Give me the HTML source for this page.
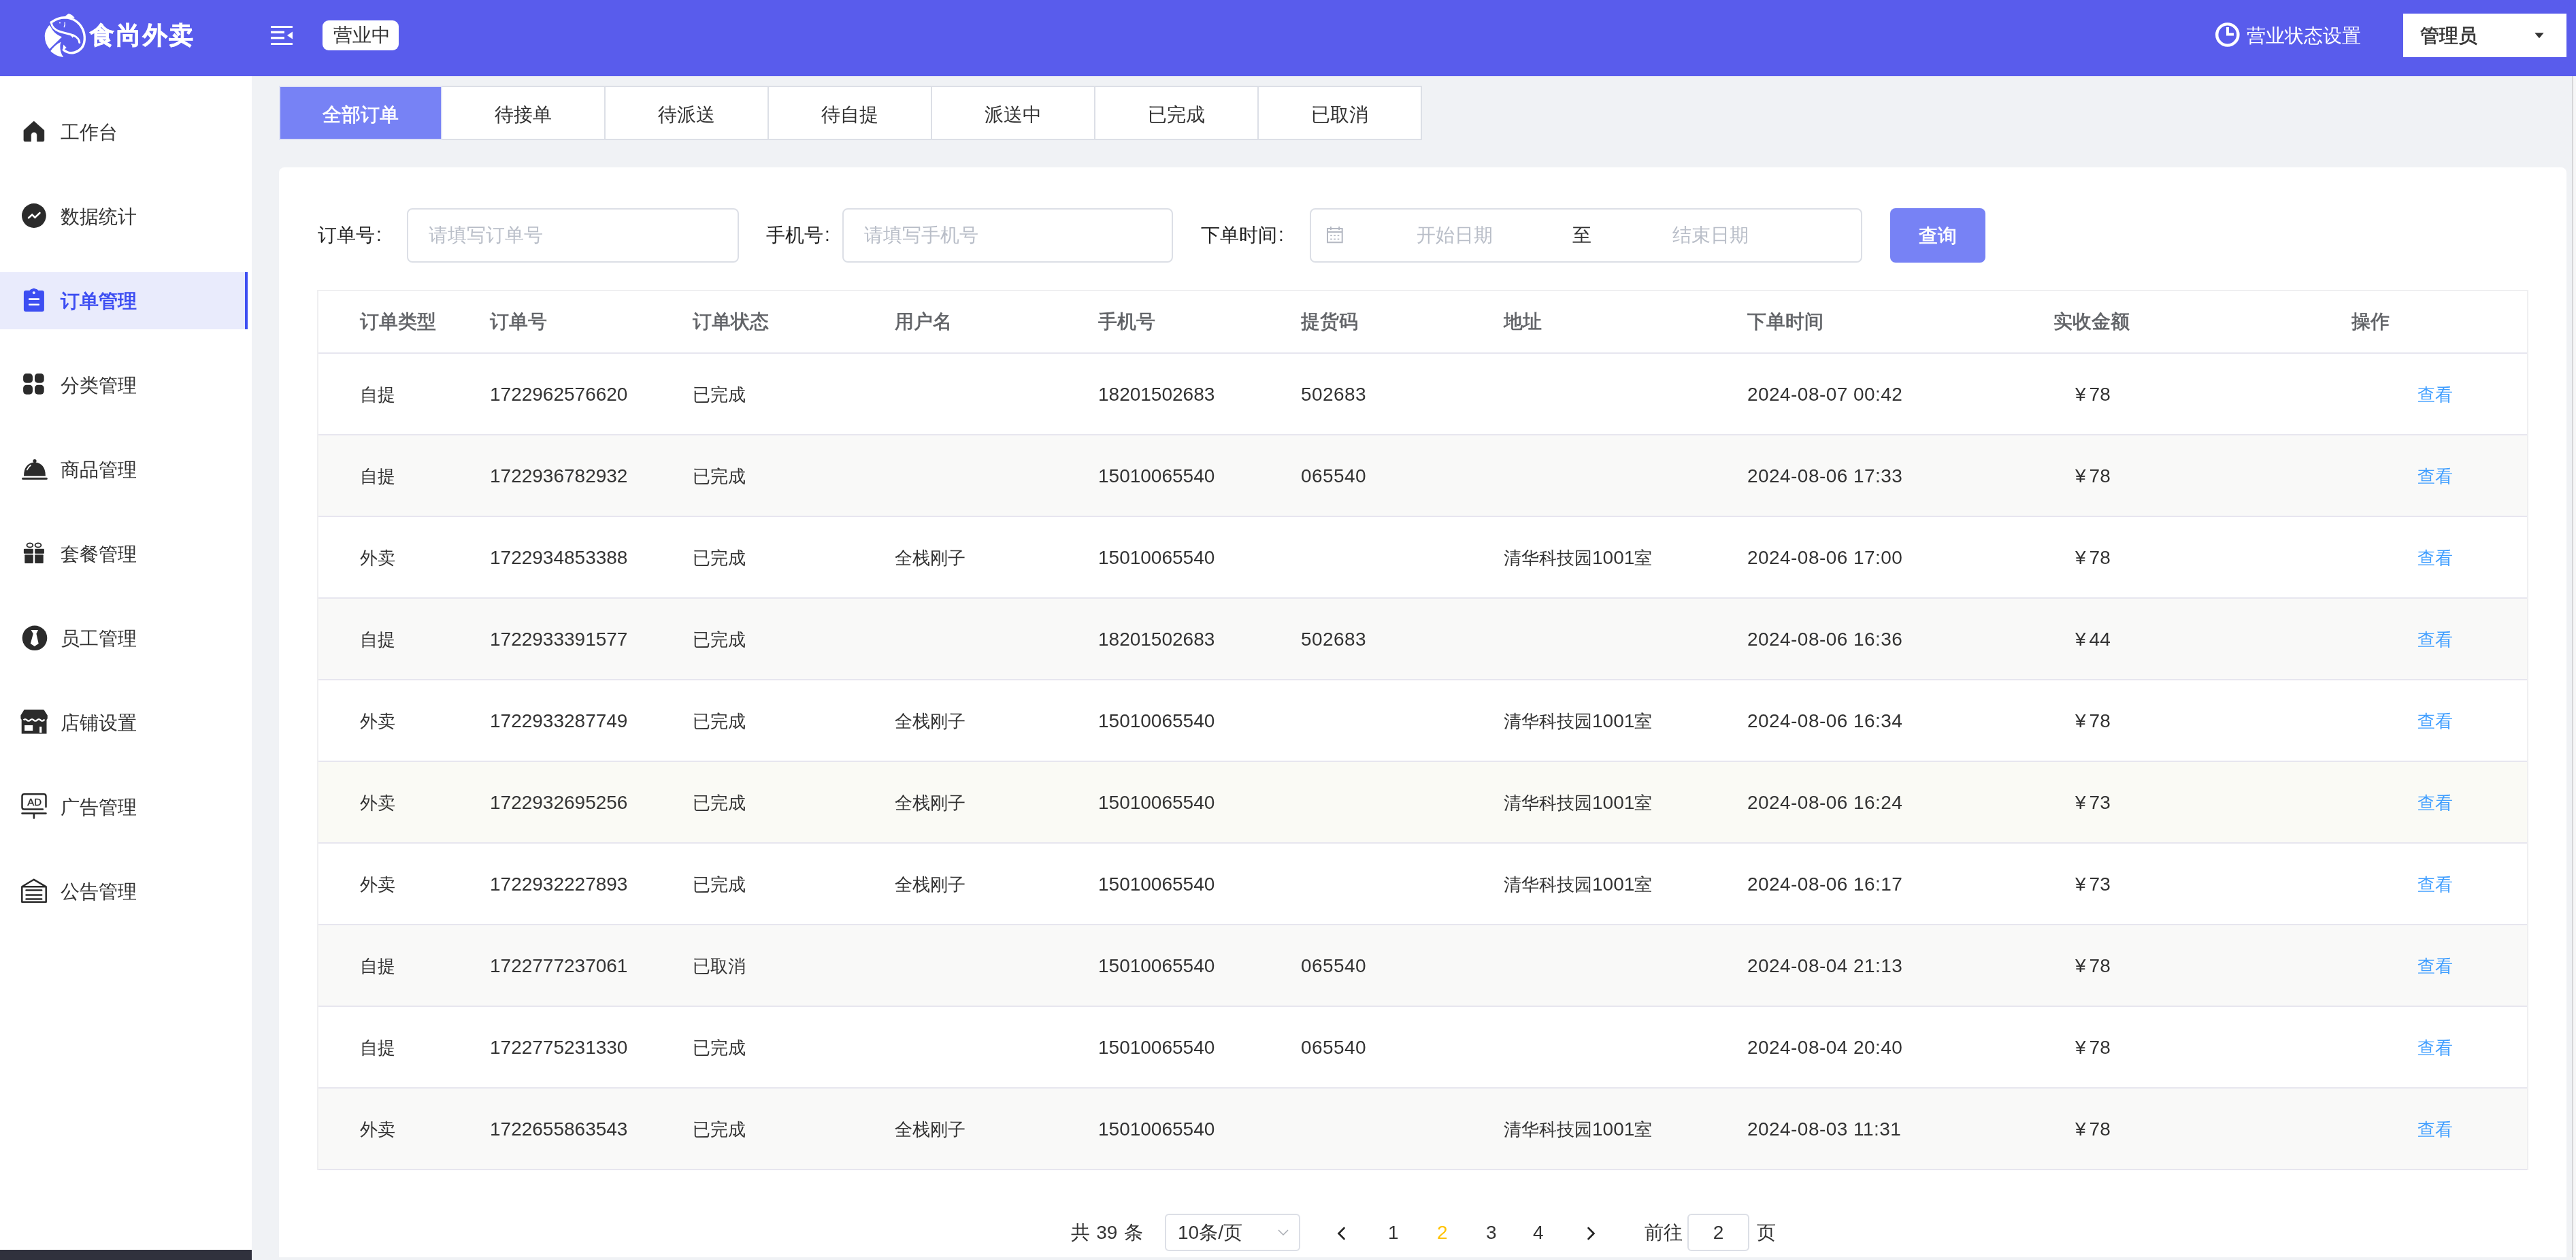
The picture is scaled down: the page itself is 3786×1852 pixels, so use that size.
<!DOCTYPE html>
<html><head><meta charset="utf-8">
<style>
*{box-sizing:border-box;margin:0;padding:0}
html,body{width:3786px;height:1852px;overflow:hidden;background:#f0f2f5;font-family:"Liberation Sans",sans-serif;color:#333;position:relative}
.a{position:absolute}
.t{position:absolute;white-space:nowrap;font-size:28px;line-height:40px;color:#333}
.th{color:#606266;-webkit-text-stroke:0.7px #606266}
.md{-webkit-text-stroke:0.7px currentColor}
.ph{color:#b9bec8}
.lk{color:#409eff}
.yen{margin-right:5px}
.c{font-size:26px}
</style></head><body>
<div id="root" style="position:absolute;left:0;top:0;width:3786px;height:1852px;overflow:hidden;will-change:transform;background:#f0f2f5">
<!-- header -->
<div class="a" style="left:0;top:0;width:3786px;height:112px;background:#595cec"></div>
<svg class="a" style="left:60px;top:15px" width="70" height="75" viewBox="0 0 70 75">
  <g fill="#fff">
    <path d="M12.5 22 C8 27.5 5.5 33 5.8 39 C6 46 8.5 52 12.8 57.1 L31 39.3 C23 36 17.5 31 14.9 25 Z"/>
    <path d="M14.3 60.1 C19.5 65.5 26 68.5 33.3 69 C29.5 64 28.2 58 28.4 52.4 C28.5 50 29 48 29.8 46.4 C23.5 49.5 18 54 14.3 60.1 Z"/>
    <path d="M33.5 11 C36 8.5 39 6 41 5 C44.5 6 47.5 8 50 11.5 Z"/>
    <path d="M42.6 35.2 L47 41 L48 35.6 Z"/>
    <path d="M32.2 59 L33.3 50.6 L37.8 55.2 Z"/>
    <circle cx="28" cy="18.5" r="1"/>
  </g>
  <g fill="none" stroke="#fff" stroke-linecap="round">
    <path d="M15.2 17.9 C20 14.5 27 11 35 10.8 C47 10.8 57 18 61.5 28 C66 38 65 50 59.5 56 C54 62 46 64 40 62 C37 61 35 60 33.3 58.3" stroke-width="3.4"/>
    <path d="M15.2 17.9 C16 24 20 28.5 26.8 31 C34 33.5 42 34.5 49 37.5 C54 40 56.5 44 56.8 47.6" stroke-width="3"/>
    <path d="M35.2 17.9 Q36 22 34.2 24.7" stroke-width="1.3"/>
  </g>
</svg>
<div class="t" style="left:132px;top:30px;font-size:36px;line-height:44px;color:#fff;font-weight:bold;-webkit-text-stroke:0.8px #fff;letter-spacing:2.8px">食尚外卖</div>
<svg class="a" style="left:396px;top:36px" width="36" height="32" viewBox="396 36 36 32">
  <g fill="#fff"><rect x="398" y="38" width="32" height="3"/><rect x="398" y="45.7" width="20" height="3.4"/><rect x="398" y="54" width="20" height="3.4"/><rect x="398" y="63" width="32" height="3"/><path d="M430 46.5 V57.6 L422 52 Z"/></g>
</svg>
<div class="a" style="left:474px;top:30px;width:112px;height:44px;background:#fff;border-radius:9px"></div>
<div class="t" style="left:490px;top:32px">营业中</div>
<svg class="a" style="left:3254px;top:31px" width="40" height="40" viewBox="3254 31 40 40">
  <circle cx="3273.8" cy="51" r="15.6" fill="none" stroke="#fff" stroke-width="4.4"/>
  <path d="M3274 40 V50.5 H3283" fill="none" stroke="#fff" stroke-width="4"/>
</svg>
<div class="t" style="left:3302px;top:33px;color:#fff">营业状态设置</div>
<div class="a" style="left:3532px;top:20px;width:240px;height:64px;background:#fff"></div>
<div class="t md" style="left:3557px;top:33px">管理员</div>
<svg class="a" style="left:3722px;top:44px" width="20" height="16" viewBox="3722 44 20 16"><path d="M3725.3 48.3 H3738.6 L3732 56.3 Z" fill="#333"/></svg>
<!-- sidebar -->
<div class="a" style="left:0;top:112px;width:370px;height:1740px;background:#fff"></div>
<div class="a" style="left:0;top:1837px;width:370px;height:15px;background:#30313d"></div>
<!-- scrollbar -->
<div class="a" style="left:3780px;top:112px;width:6px;height:1736px;background:#f7f7f7;border-left:2px solid #d6d6d8"></div>
<!-- card -->
<div class="a" style="left:410px;top:246px;width:3362px;height:1602px;background:#fff;border-radius:8px 8px 0 0"></div>
<!-- search -->
<div class="t" style="left:467px;top:326px;color:#1f1f1f">订单号<span style="position:relative;left:2px;top:-1px">:</span></div>
<div class="a" style="left:598px;top:306px;width:488px;height:80px;border:2px solid #dcdfe6;border-radius:8px"></div>
<div class="t ph" style="left:630px;top:326px">请填写订单号</div>
<div class="t" style="left:1126px;top:326px;color:#1f1f1f">手机号<span style="position:relative;left:2px;top:-1px">:</span></div>
<div class="a" style="left:1238px;top:306px;width:486px;height:80px;border:2px solid #dcdfe6;border-radius:8px"></div>
<div class="t ph" style="left:1270px;top:326px">请填写手机号</div>
<div class="t" style="left:1765px;top:326px;color:#1f1f1f">下单时间<span style="position:relative;left:2px;top:-1px">:</span></div>
<div class="a" style="left:1925px;top:306px;width:812px;height:80px;border:2px solid #dcdfe6;border-radius:8px"></div>
<svg class="a" style="left:1946px;top:331px" width="32" height="30" viewBox="0 0 32 30">
  <g fill="none" stroke="#b4b8c2" stroke-width="2"><rect x="5" y="5" width="21.7" height="20.3"/><path d="M5 10 H26.7 M9.9 2 V7 M22.2 2 V7"/></g>
  <g fill="#b4b8c2"><rect x="9.2" y="14.3" width="2.6" height="1.8"/><rect x="14.3" y="14.3" width="2.6" height="1.8"/><rect x="19.7" y="14.3" width="2.6" height="1.8"/><rect x="9.2" y="19.6" width="2.6" height="1.8"/><rect x="14.3" y="19.6" width="2.6" height="1.8"/><rect x="19.7" y="19.6" width="2.6" height="1.8"/></g>
</svg>
<div class="t ph" style="left:2082px;top:326px">开始日期</div>
<div class="t" style="left:2311px;top:326px">至</div>
<div class="t ph" style="left:2458px;top:326px">结束日期</div>
<div class="a" style="left:2778px;top:306px;width:140px;height:80px;background:#7782f5;border-radius:8px"></div>
<div class="t md" style="left:2778px;top:327px;width:140px;text-align:center;color:#fff">查询</div>
<div class="a" style="left:0;top:400px;width:360px;height:84px;background:#e9ebfc"></div>
<div class="a" style="left:360px;top:400px;width:4px;height:84px;background:#3d4ef2"></div>
<svg class="a" style="left:30px;top:174px" width="40" height="38" viewBox="30 174 40 38"><path fill="#2b2b2b" d="M49.8 178.1 L64.9 191.5 V206 Q64.9 207.9 63 207.9 H54.4 V198.6 A4.4 4.4 0 0 0 45.6 198.6 V207.9 H36.8 Q34.9 207.9 34.9 206 V191.5 Z" stroke="#2b2b2b" stroke-width="0.5" stroke-linejoin="round"/></svg>
<div class="t" style="left:89px;top:175px;">工作台</div>
<svg class="a" style="left:30px;top:297px" width="40" height="40" viewBox="30 297 40 40"><circle cx="49.9" cy="317" r="17.9" fill="#2b2b2b"/><path d="M42 320.2 L47.2 315.6 L51.4 319.6 L58.4 313" fill="none" stroke="#fff" stroke-width="2.6" stroke-linecap="round" stroke-linejoin="miter"/></svg>
<div class="t" style="left:89px;top:299px;">数据统计</div>
<svg class="a" style="left:30px;top:420px" width="40" height="40" viewBox="30 420 40 40"><path fill="#3d4ef2" d="M38 426.9 H43.5 Q45 424.5 47.5 424.4 Q49.8 423.3 52 424.4 Q55 424.5 56.3 426.9 H61.9 Q64.9 426.9 64.9 429.9 V454.9 Q64.9 457.9 61.9 457.9 H38 Q34.9 457.9 34.9 454.9 V429.9 Q34.9 426.9 38 426.9 Z"/><circle cx="49.8" cy="430.3" r="2" fill="#e9ebfc"/><rect x="42" y="438.3" width="16" height="2.7" rx="1" fill="#fff"/><rect x="42" y="446.4" width="16" height="2.7" rx="1" fill="#fff"/></svg>
<div class="t" style="left:89px;top:423px;color:#3d4ef2;font-weight:bold">订单管理</div>
<svg class="a" style="left:30px;top:545px" width="40" height="40" viewBox="30 545 40 40"><rect x="34.1" y="549.1" width="13.9" height="13.7" rx="4.6" fill="#2b2b2b"/><rect x="51" y="549.1" width="13.7" height="13.7" rx="4.6" fill="#2b2b2b"/><rect x="34.1" y="565.8" width="13.9" height="13.9" rx="4.6" fill="#2b2b2b"/><rect x="51" y="565.8" width="13.7" height="13.9" rx="4.6" fill="#2b2b2b"/></svg>
<div class="t" style="left:89px;top:547px;">分类管理</div>
<svg class="a" style="left:30px;top:670px" width="42" height="40" viewBox="30 670 42 40"><circle cx="51" cy="677.6" r="2.6" fill="#2b2b2b"/><path fill="#2b2b2b" d="M35 699.8 Q35 681 51 679.6 Q66.9 681 66.9 699.8 Z"/><path d="M39.8 690.5 Q41.5 686.5 45 684" fill="none" stroke="#fff" stroke-width="1.7" stroke-linecap="round"/><rect x="32.1" y="702" width="37.7" height="3" rx="1.5" fill="#2b2b2b"/></svg>
<div class="t" style="left:89px;top:671px;">商品管理</div>
<svg class="a" style="left:30px;top:793px" width="40" height="40" viewBox="30 793 40 40"><ellipse cx="43.9" cy="801.4" rx="4.4" ry="3" fill="none" stroke="#2b2b2b" stroke-width="1.9"/><ellipse cx="56" cy="801.4" rx="4.4" ry="3" fill="none" stroke="#2b2b2b" stroke-width="1.9"/><rect x="34.9" y="806.7" width="13.9" height="7.1" rx="1" fill="#2b2b2b"/><rect x="51.2" y="806.7" width="13.7" height="7.1" rx="1" fill="#2b2b2b"/><rect x="36.3" y="815.2" width="12.5" height="12.7" rx="1" fill="#2b2b2b"/><rect x="51.2" y="815.2" width="12.5" height="12.7" rx="1" fill="#2b2b2b"/></svg>
<div class="t" style="left:89px;top:795px;">套餐管理</div>
<svg class="a" style="left:30px;top:917px" width="42" height="42" viewBox="30 917 42 42"><circle cx="51" cy="937.8" r="18.3" fill="#2b2b2b"/><path fill="#fff" d="M45.6 925.9 H56 L53.4 931.4 L56.7 946.1 L50.8 950 L44.8 946.1 L48.8 931.4 Z"/></svg>
<div class="t" style="left:89px;top:919px;">员工管理</div>
<svg class="a" style="left:28px;top:1040px" width="44" height="42" viewBox="28 1040 44 42"><path fill="#2b2b2b" d="M36 1043.1 H63.4 Q64.3 1043.1 65 1044 L69.8 1051.5 V1056 L68.5 1058 V1078.6 H31.7 V1058 L30.4 1056 V1051.5 L35 1044 Q35.4 1043.1 36 1043.1 Z"/><path d="M34.6 1058.4 Q37 1055.8 39.5 1058.4 Q42 1061 44.5 1058.4 Q47 1055.8 49.5 1058.4 Q52 1061 54.5 1058.4 Q57 1055.8 59.5 1058.4 Q62 1061 64.5 1058.4 L65.6 1057.6" fill="none" stroke="#fff" stroke-width="2.3"/><rect x="36.1" y="1066" width="12.1" height="8" fill="#fff"/><rect x="58.1" y="1068.1" width="3.2" height="8.8" fill="#fff"/></svg>
<div class="t" style="left:89px;top:1043px;">店铺设置</div>
<svg class="a" style="left:28px;top:1163px" width="44" height="44" viewBox="28 1163 44 44"><path d="M62.9 1189.6 H35.5 Q32.5 1189.6 32.5 1186.6 V1170.5 Q32.5 1167.3 35.7 1167.3 H64.3 Q67.5 1167.3 67.5 1170.5 V1186" fill="none" stroke="#2b2b2b" stroke-width="2.5" stroke-linecap="round"/><text x="50.6" y="1183.8" text-anchor="middle" font-family="Liberation Sans" font-size="15" fill="#2b2b2b" stroke="#2b2b2b" stroke-width="0.4">AD</text><path d="M32.5 1195.6 H67.5 M49.9 1195.6 V1202.5" fill="none" stroke="#2b2b2b" stroke-width="2.6" stroke-linecap="round"/></svg>
<div class="t" style="left:89px;top:1167px;">广告管理</div>
<svg class="a" style="left:28px;top:1287px" width="44" height="44" viewBox="28 1287 44 44"><path d="M32.3 1303.3 L49.8 1292.8 L67.7 1303.3 Z M32.3 1303.3 V1325.7 H67.7 V1303.3" fill="none" stroke="#2b2b2b" stroke-width="2.5" stroke-linejoin="round"/><path d="M38.5 1308.6 H61.2 M38.5 1315.5 H61.2 M38.5 1321.4 H61.2" stroke="#2b2b2b" stroke-width="2.5" stroke-linecap="round"/></svg>
<div class="t" style="left:89px;top:1291px;">公告管理</div>
<div class="a" style="left:410px;top:126px;width:1680px;height:80px;background:#fff;border:2px solid #dcdfe6"></div>
<div class="a" style="left:410px;top:126px;width:240px;height:80px;background:#7782f5;border:2px solid #dfe2f6"></div>
<div class="t md" style="left:412px;top:149px;width:236px;text-align:center;color:#fff">全部订单</div>
<div class="t" style="left:650px;top:149px;width:238px;text-align:center">待接单</div>
<div class="a" style="left:888px;top:128px;width:2px;height:76px;background:#dcdfe6"></div>
<div class="t" style="left:890px;top:149px;width:238px;text-align:center">待派送</div>
<div class="a" style="left:1128px;top:128px;width:2px;height:76px;background:#dcdfe6"></div>
<div class="t" style="left:1130px;top:149px;width:238px;text-align:center">待自提</div>
<div class="a" style="left:1368px;top:128px;width:2px;height:76px;background:#dcdfe6"></div>
<div class="t" style="left:1370px;top:149px;width:238px;text-align:center">派送中</div>
<div class="a" style="left:1608px;top:128px;width:2px;height:76px;background:#dcdfe6"></div>
<div class="t" style="left:1610px;top:149px;width:238px;text-align:center">已完成</div>
<div class="a" style="left:1848px;top:128px;width:2px;height:76px;background:#dcdfe6"></div>
<div class="t" style="left:1850px;top:149px;width:238px;text-align:center">已取消</div>
<div class="a" style="left:466px;top:426px;width:3250px;height:1294px;border:2px solid #efeff1;background:#fff"></div>
<div class="t th" style="left:529px;top:453px">订单类型</div>
<div class="t th" style="left:720px;top:453px">订单号</div>
<div class="t th" style="left:1018px;top:453px">订单状态</div>
<div class="t th" style="left:1315px;top:453px">用户名</div>
<div class="t th" style="left:1614px;top:453px">手机号</div>
<div class="t th" style="left:1912px;top:453px">提货码</div>
<div class="t th" style="left:2210px;top:453px">地址</div>
<div class="t th" style="left:2568px;top:453px">下单时间</div>
<div class="t th" style="left:3018px;top:453px">实收金额</div>
<div class="t th" style="left:3456px;top:453px">操作</div>
<div class="a" style="left:468px;top:518px;width:3246px;height:2px;background:#e7e6ef"></div>
<div class="a" style="left:468px;top:520px;width:3246px;height:118px;background:#fff"></div>
<div class="t" style="left:529px;top:560px"><span class="c">自提</span></div>
<div class="t" style="left:720px;top:560px">1722962576620</div>
<div class="t" style="left:1018px;top:560px"><span class="c">已完成</span></div>
<div class="t" style="left:1614px;top:560px">18201502683</div>
<div class="t" style="left:1912px;top:560px;letter-spacing:0.45px">502683</div>
<div class="t" style="left:2568px;top:560px;letter-spacing:0.45px">2024-08-07 00:42</div>
<div class="t" style="left:3050px;top:560px"><span class="yen">¥</span>78</div>
<div class="t lk" style="left:3553px;top:560px"><span class="c">查看</span></div>
<div class="a" style="left:468px;top:638px;width:3246px;height:2px;background:#e7e6ef"></div>
<div class="a" style="left:468px;top:640px;width:3246px;height:118px;background:#f9f9f8"></div>
<div class="t" style="left:529px;top:680px"><span class="c">自提</span></div>
<div class="t" style="left:720px;top:680px">1722936782932</div>
<div class="t" style="left:1018px;top:680px"><span class="c">已完成</span></div>
<div class="t" style="left:1614px;top:680px">15010065540</div>
<div class="t" style="left:1912px;top:680px;letter-spacing:0.45px">065540</div>
<div class="t" style="left:2568px;top:680px;letter-spacing:0.45px">2024-08-06 17:33</div>
<div class="t" style="left:3050px;top:680px"><span class="yen">¥</span>78</div>
<div class="t lk" style="left:3553px;top:680px"><span class="c">查看</span></div>
<div class="a" style="left:468px;top:758px;width:3246px;height:2px;background:#e7e6ef"></div>
<div class="a" style="left:468px;top:760px;width:3246px;height:118px;background:#fff"></div>
<div class="t" style="left:529px;top:800px"><span class="c">外卖</span></div>
<div class="t" style="left:720px;top:800px">1722934853388</div>
<div class="t" style="left:1018px;top:800px"><span class="c">已完成</span></div>
<div class="t" style="left:1315px;top:800px"><span class="c">全栈刚子</span></div>
<div class="t" style="left:1614px;top:800px">15010065540</div>
<div class="t" style="left:2210px;top:800px"><span class="c">清华科技园</span>1001<span class="c">室</span></div>
<div class="t" style="left:2568px;top:800px;letter-spacing:0.45px">2024-08-06 17:00</div>
<div class="t" style="left:3050px;top:800px"><span class="yen">¥</span>78</div>
<div class="t lk" style="left:3553px;top:800px"><span class="c">查看</span></div>
<div class="a" style="left:468px;top:878px;width:3246px;height:2px;background:#e7e6ef"></div>
<div class="a" style="left:468px;top:880px;width:3246px;height:118px;background:#f9f9f8"></div>
<div class="t" style="left:529px;top:920px"><span class="c">自提</span></div>
<div class="t" style="left:720px;top:920px">1722933391577</div>
<div class="t" style="left:1018px;top:920px"><span class="c">已完成</span></div>
<div class="t" style="left:1614px;top:920px">18201502683</div>
<div class="t" style="left:1912px;top:920px;letter-spacing:0.45px">502683</div>
<div class="t" style="left:2568px;top:920px;letter-spacing:0.45px">2024-08-06 16:36</div>
<div class="t" style="left:3050px;top:920px"><span class="yen">¥</span>44</div>
<div class="t lk" style="left:3553px;top:920px"><span class="c">查看</span></div>
<div class="a" style="left:468px;top:998px;width:3246px;height:2px;background:#e7e6ef"></div>
<div class="a" style="left:468px;top:1000px;width:3246px;height:118px;background:#fff"></div>
<div class="t" style="left:529px;top:1040px"><span class="c">外卖</span></div>
<div class="t" style="left:720px;top:1040px">1722933287749</div>
<div class="t" style="left:1018px;top:1040px"><span class="c">已完成</span></div>
<div class="t" style="left:1315px;top:1040px"><span class="c">全栈刚子</span></div>
<div class="t" style="left:1614px;top:1040px">15010065540</div>
<div class="t" style="left:2210px;top:1040px"><span class="c">清华科技园</span>1001<span class="c">室</span></div>
<div class="t" style="left:2568px;top:1040px;letter-spacing:0.45px">2024-08-06 16:34</div>
<div class="t" style="left:3050px;top:1040px"><span class="yen">¥</span>78</div>
<div class="t lk" style="left:3553px;top:1040px"><span class="c">查看</span></div>
<div class="a" style="left:468px;top:1118px;width:3246px;height:2px;background:#e7e6ef"></div>
<div class="a" style="left:468px;top:1120px;width:3246px;height:118px;background:#fafaf5"></div>
<div class="t" style="left:529px;top:1160px"><span class="c">外卖</span></div>
<div class="t" style="left:720px;top:1160px">1722932695256</div>
<div class="t" style="left:1018px;top:1160px"><span class="c">已完成</span></div>
<div class="t" style="left:1315px;top:1160px"><span class="c">全栈刚子</span></div>
<div class="t" style="left:1614px;top:1160px">15010065540</div>
<div class="t" style="left:2210px;top:1160px"><span class="c">清华科技园</span>1001<span class="c">室</span></div>
<div class="t" style="left:2568px;top:1160px;letter-spacing:0.45px">2024-08-06 16:24</div>
<div class="t" style="left:3050px;top:1160px"><span class="yen">¥</span>73</div>
<div class="t lk" style="left:3553px;top:1160px"><span class="c">查看</span></div>
<div class="a" style="left:468px;top:1238px;width:3246px;height:2px;background:#e7e6ef"></div>
<div class="a" style="left:468px;top:1240px;width:3246px;height:118px;background:#fff"></div>
<div class="t" style="left:529px;top:1280px"><span class="c">外卖</span></div>
<div class="t" style="left:720px;top:1280px">1722932227893</div>
<div class="t" style="left:1018px;top:1280px"><span class="c">已完成</span></div>
<div class="t" style="left:1315px;top:1280px"><span class="c">全栈刚子</span></div>
<div class="t" style="left:1614px;top:1280px">15010065540</div>
<div class="t" style="left:2210px;top:1280px"><span class="c">清华科技园</span>1001<span class="c">室</span></div>
<div class="t" style="left:2568px;top:1280px;letter-spacing:0.45px">2024-08-06 16:17</div>
<div class="t" style="left:3050px;top:1280px"><span class="yen">¥</span>73</div>
<div class="t lk" style="left:3553px;top:1280px"><span class="c">查看</span></div>
<div class="a" style="left:468px;top:1358px;width:3246px;height:2px;background:#e7e6ef"></div>
<div class="a" style="left:468px;top:1360px;width:3246px;height:118px;background:#f9f9f8"></div>
<div class="t" style="left:529px;top:1400px"><span class="c">自提</span></div>
<div class="t" style="left:720px;top:1400px">1722777237061</div>
<div class="t" style="left:1018px;top:1400px"><span class="c">已取消</span></div>
<div class="t" style="left:1614px;top:1400px">15010065540</div>
<div class="t" style="left:1912px;top:1400px;letter-spacing:0.45px">065540</div>
<div class="t" style="left:2568px;top:1400px;letter-spacing:0.45px">2024-08-04 21:13</div>
<div class="t" style="left:3050px;top:1400px"><span class="yen">¥</span>78</div>
<div class="t lk" style="left:3553px;top:1400px"><span class="c">查看</span></div>
<div class="a" style="left:468px;top:1478px;width:3246px;height:2px;background:#e7e6ef"></div>
<div class="a" style="left:468px;top:1480px;width:3246px;height:118px;background:#fff"></div>
<div class="t" style="left:529px;top:1520px"><span class="c">自提</span></div>
<div class="t" style="left:720px;top:1520px">1722775231330</div>
<div class="t" style="left:1018px;top:1520px"><span class="c">已完成</span></div>
<div class="t" style="left:1614px;top:1520px">15010065540</div>
<div class="t" style="left:1912px;top:1520px;letter-spacing:0.45px">065540</div>
<div class="t" style="left:2568px;top:1520px;letter-spacing:0.45px">2024-08-04 20:40</div>
<div class="t" style="left:3050px;top:1520px"><span class="yen">¥</span>78</div>
<div class="t lk" style="left:3553px;top:1520px"><span class="c">查看</span></div>
<div class="a" style="left:468px;top:1598px;width:3246px;height:2px;background:#e7e6ef"></div>
<div class="a" style="left:468px;top:1600px;width:3246px;height:118px;background:#f9f9f8"></div>
<div class="t" style="left:529px;top:1640px"><span class="c">外卖</span></div>
<div class="t" style="left:720px;top:1640px">1722655863543</div>
<div class="t" style="left:1018px;top:1640px"><span class="c">已完成</span></div>
<div class="t" style="left:1315px;top:1640px"><span class="c">全栈刚子</span></div>
<div class="t" style="left:1614px;top:1640px">15010065540</div>
<div class="t" style="left:2210px;top:1640px"><span class="c">清华科技园</span>1001<span class="c">室</span></div>
<div class="t" style="left:2568px;top:1640px;letter-spacing:0.45px">2024-08-03 11:31</div>
<div class="t" style="left:3050px;top:1640px"><span class="yen">¥</span>78</div>
<div class="t lk" style="left:3553px;top:1640px"><span class="c">查看</span></div>
<div class="a" style="left:468px;top:1718px;width:3246px;height:2px;background:#e7e6ef"></div>
<!-- pagination -->
<div class="t" style="left:1574px;top:1792px;word-spacing:1.5px">共 39 条</div>
<div class="a" style="left:1712px;top:1784px;width:199px;height:55px;border:2px solid #dcdfe6;border-radius:6px"></div>
<div class="t" style="left:1731px;top:1792px">10条/页</div>
<svg class="a" style="left:1876px;top:1802px" width="20" height="20" viewBox="0 0 20 20"><path d="M3 6 L10 13 L17 6" fill="none" stroke="#a8abb2" stroke-width="1.5"/></svg>
<svg class="a" style="left:1960px;top:1800px" width="22" height="26" viewBox="0 0 22 26"><path d="M15.5 5 L7.5 13 L15.5 21" fill="none" stroke="#222" stroke-width="2.6" stroke-linecap="round"/></svg>
<div class="t" style="left:2040px;top:1792px">1</div>
<div class="t" style="left:2112px;top:1792px;color:#ffc200">2</div>
<div class="t" style="left:2184px;top:1792px">3</div>
<div class="t" style="left:2253px;top:1792px">4</div>
<svg class="a" style="left:2328px;top:1800px" width="22" height="26" viewBox="0 0 22 26"><path d="M6.5 5 L14.5 13 L6.5 21" fill="none" stroke="#222" stroke-width="2.6" stroke-linecap="round"/></svg>
<div class="t" style="left:2417px;top:1792px">前往</div>
<div class="a" style="left:2480px;top:1784px;width:91px;height:55px;border:2px solid #dcdfe6;border-radius:6px"></div>
<div class="t" style="left:2480px;top:1792px;width:91px;text-align:center">2</div>
<div class="t" style="left:2582px;top:1792px">页</div>
</div>
</body></html>
